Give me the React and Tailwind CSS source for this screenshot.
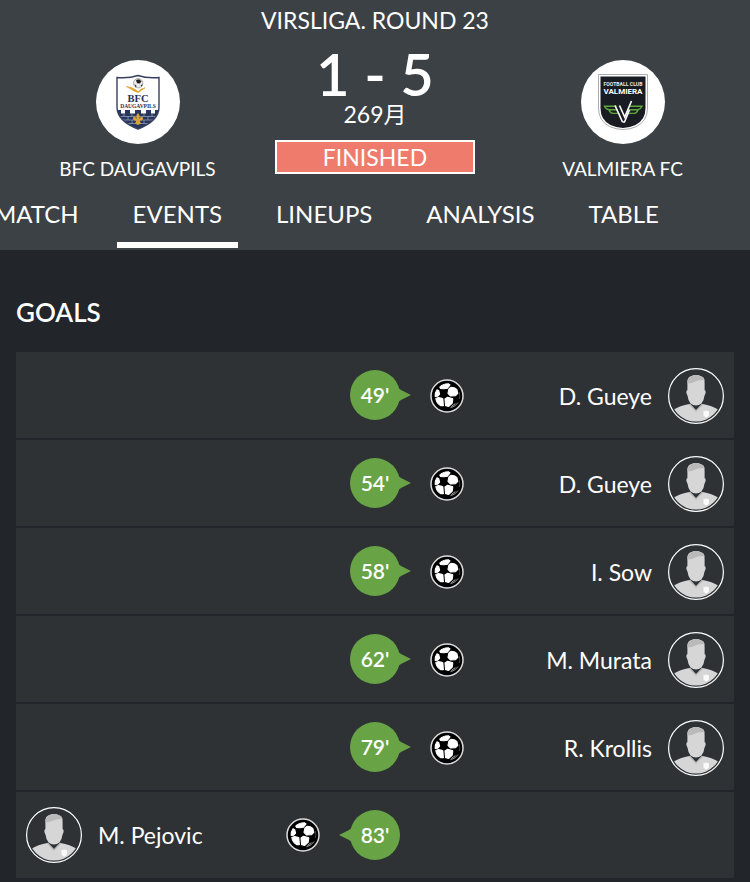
const goals = [
  { minute: "49'", player: "D. Gueye", side: "away" },
  { minute: "54'", player: "D. Gueye", side: "away" },
  { minute: "58'", player: "I. Sow", side: "away" },
  { minute: "62'", player: "M. Murata", side: "away" },
  { minute: "79'", player: "R. Krollis", side: "away" },
  { minute: "83'", player: "M. Pejovic", side: "home" },
];

const tabs = ["MATCH", "EVENTS", "LINEUPS", "ANALYSIS", "TABLE"];

function Ball() {
  return (
    <svg viewBox="0 0 34 34" className="size-[34px] shrink-0" role="img" aria-label="Goal">
      <circle cx="17" cy="17" r="16" fill="#000" stroke="#dcdcdc" strokeWidth="1.5" />
      <g fill="#fff" stroke="#fff" strokeWidth="1.1" strokeLinejoin="round">
        <path d="M9.8 8.2 Q12.6 4.9 18.6 4.8 L20 6 L17.4 9.2 L14 9.8 L10.6 9.4Z" />
        <path d="M18.9 10 L21.2 8.2 Q24.5 8.2 26.8 10.4 L27.8 14.4 L25.6 16.6 L20.4 17 L18 14.4Z" />
        <path d="M7 10.8 L8.8 11.8 L9.6 15.2 L7.8 17.2 L5.2 17.4 Q4.6 14 7 10.8Z" />
        <path d="M5.8 19.6 L8.6 18.6 L12.8 19.6 L13.4 26.6 L10.6 26.6 Q6.8 24.6 5.8 19.6Z" />
        <path d="M15 20 L17.6 18.2 L22.8 19.8 L22.2 24.2 L18.8 27.4 L15.6 26.8Z" />
      </g>
      <path d="M20.5 28.8 Q25.5 27.5 28 23.6 M21.4 27.4 L25.4 24.6" fill="none" stroke="#ccc" strokeWidth="0.8" />
      <path d="M29.4 13.2 Q30.4 17 29.2 20" fill="none" stroke="#777" strokeWidth="0.6" />
    </svg>
  );
}

function Avatar({ clip }) {
  return (
    <svg viewBox="0 0 56 56" className="size-14 shrink-0" aria-hidden="true">
      <defs>
        <clipPath id={clip}>
          <circle cx="28" cy="28" r="25.6" />
        </clipPath>
      </defs>
      <g clipPath={`url(#${clip})`} fill="#d6d6d6">
        <path d="M5 42 Q12 37.5 21.5 36 L28 43 L34.5 36 Q44 37.5 51 42 L51 56 L5 56Z" />
        <path d="M21.5 36 L28 43 L34.5 36" fill="none" stroke="#b9b9b9" strokeWidth="1.4" />
        <path d="M19.4 15 Q19 9.4 23 8.2 Q28 6 33 8.2 Q37 9.4 36.6 15 L36.6 22 Q38 22.4 37.6 25 L36.4 28 Q36 32.6 33.4 35.4 Q31 37.4 28 37.4 Q25 37.4 22.6 35.4 Q20 32.6 19.6 28 L18.4 25 Q18 22.4 19.4 22Z" />
        <path d="M19.4 15.6 Q19 9.4 23 8.2 Q28 6 33 8.2 Q36 9 36.6 12 Q31 11.8 27.4 13.4 Q23.5 15.2 19.4 15.6Z" fill="#bababa" />
        <path d="M35.4 43.2 L38.2 42.6 L41 43.2 L40.8 47.2 Q40 48.8 38.2 49.6 Q36.4 48.8 35.6 47.2Z" fill="#fafafa" />
      </g>
      <circle cx="28" cy="28" r="27.4" fill="none" stroke="#fff" strokeWidth="1.2" />
    </svg>
  );
}

function DaugavpilsCrest() {
  return (
    <svg viewBox="0 0 84 84" className="size-[84px]" role="img" aria-label="BFC Daugavpils crest">
      <defs>
        <clipPath id="daugavpils-shield">
          <path d="M21 17.5 Q33 18.5 42 15.5 Q51 18.5 63 17.5 V47 Q63 61 42 69 Q21 61 21 47Z" />
        </clipPath>
      </defs>
      <circle cx="42" cy="42" r="42" fill="#fff" />
      <g clipPath="url(#daugavpils-shield)">
        <path d="M20 50 h5 v3.5 h4 v-3.5 h5 v3.5 h5 v-3.5 h6 v3.5 h5 v-3.5 h5 v3.5 h4 v-3.5 h5 V70 H20Z" fill="#29365c" />
        <path d="M21 56.5H63 M21 60H63 M22 63.5H62 M28 53v3.5 M36 53v3.5 M48 53v3.5 M56 53v3.5 M32 56.5V60 M52 56.5V60 M36 60v3.5 M48 60v3.5" stroke="#8e9bb5" strokeWidth="0.8" />
      </g>
      <path d="M21 17.5 Q33 18.5 42 15.5 Q51 18.5 63 17.5 V47 Q63 61 42 69 Q21 61 21 47Z" fill="none" stroke="#37415f" strokeWidth="1.4" />
      <circle cx="42.2" cy="23.2" r="4.7" fill="#eee" stroke="#777" strokeWidth="0.6" />
      <path d="M40 20 l3-.7 2.5 2 -1.5 2.3 -3-.4Z M38.5 24 l2.2 2 -1 1.5Z M44.5 25 l2-.5 -.7 2.2Z" fill="#222" />
      <path d="M30.5 26.5 Q36 27 40 30 L42 31.8 L43.5 30.3 Q45 28.8 49 27.8 L45 30.5 L42.5 32.5 Q37 31 35.5 29.3Z" fill="#dfa32e" stroke="#dfa32e" strokeWidth="0.8" />
      <text x="42" y="41.8" textAnchor="middle" fontFamily="Liberation Serif, serif" fontWeight="700" fontSize="10.5" fill="#26315a">BFC</text>
      <text x="42" y="47.6" textAnchor="middle" fontFamily="Liberation Serif, serif" fontWeight="700" fontSize="5.5" fill="#26315a">DAUGAVPILS</text>
      <path d="M42 53 Q44.8 56 43 59 Q46 55 47 58 Q47 61 43.7 60.7 L45 63.5 L42 65 L39 63.5 L40.3 60.7 Q37 61 37 58 Q38 55 41 59 Q39.2 56 42 53Z" fill="#d8a33a" />
    </svg>
  );
}

function ValmieraCrest() {
  return (
    <svg viewBox="0 0 84 84" className="size-[84px]" role="img" aria-label="Valmiera FC crest">
      <circle cx="42" cy="42" r="42" fill="#fff" />
      <path d="M17.5 14.5 H66.5 V48 Q66.5 61 55.5 66.5 Q49 69.5 42 69.5 Q35 69.5 28.5 66.5 Q17.5 61 17.5 48Z" fill="#fff" stroke="#a9acb0" strokeWidth="1" />
      <path d="M19.5 16.5 H64.5 V48 Q64.5 60 54.5 65 Q48 68 42 68 Q36 68 29.5 65 Q19.5 60 19.5 48Z" fill="#191c23" />
      <text x="42" y="25.7" textAnchor="middle" fontFamily="Roboto, sans-serif" fontWeight="700" fontSize="5.1" fill="#e8e8e8">FOOTBALL CLUB</text>
      <text x="42" y="33.7" textAnchor="middle" fontFamily="Roboto, sans-serif" fontWeight="700" fontSize="8" fill="#fff">VALMIERA</text>
      <g fill="none" stroke="#5ca739" strokeWidth="1.4">
        <path d="M35.5 46.2 H23.5 Q25 49.4 28 49.8 H37 M28 49.8 Q29 53.2 32 53.4 H38.5" />
        <path d="M49 46.2 H61 Q59.5 49.4 57 49.8 H47.5 M57 49.8 Q56 53.2 53 53.4 H46" />
      </g>
      <path d="M34 45.5 L41.5 62 M38.5 45.5 L43.7 57 L50.5 41 M41.5 62 H43.5 L48.5 50" fill="none" stroke="#fff" strokeWidth="1.6" />
    </svg>
  );
}

function Minute({ value, side }) {
  return (
    <div className="relative flex size-[50px] items-center justify-center rounded-full bg-[#68a345] text-[21px] font-semibold">
      <svg
        viewBox="0 0 16 16"
        className={side === "away" ? "absolute -right-[11px] size-4" : "absolute -left-[11px] size-4 rotate-180"}
        aria-hidden="true"
      >
        <path d="M0 0 L3 0 Q4 2 6 3 L16 8 L6 13 Q4 14 3 16 L0 16Z" fill="#68a345" />
      </svg>
      <span className="relative">{value}</span>
    </div>
  );
}

function GoalRow({ goal, index }) {
  const away = goal.side === "away";
  return (
    <li className="grid h-[86px] grid-cols-[1fr_50px_1fr] items-center bg-[#2e3235] px-2.5">
      <div>
        {!away && (
          <div className="flex items-center justify-between pr-[30px]">
            <div className="flex items-center gap-4">
              <Avatar clip={`avatar-${index}`} />
              <span className="text-[23px]">{goal.player}</span>
            </div>
            <Ball />
          </div>
        )}
      </div>
      <Minute value={goal.minute} side={goal.side} />
      <div>
        {away && (
          <div className="flex items-center justify-between pt-0.5 pl-[30px]">
            <Ball />
            <div className="flex items-center gap-4">
              <span className="text-[23px]">{goal.player}</span>
              <Avatar clip={`avatar-${index}`} />
            </div>
          </div>
        )}
      </div>
    </li>
  );
}

function Team({ name, children }) {
  return (
    <div className="flex flex-col items-center gap-[11px] pt-5">
      {children}
      <span className="text-[19px] leading-7 whitespace-nowrap">{name}</span>
    </div>
  );
}

export default function App() {
  return (
    <div className="min-h-screen overflow-x-hidden bg-[#22252a] font-['Lato','Noto_Sans_CJK_JP',sans-serif] text-white">
      <header className="bg-[#3c4145]">
        <h1 className="pt-1 text-center text-[23px] leading-8">VIRSLIGA. ROUND 23</h1>
        <div className="grid grid-cols-[1fr_200px_1fr] pt-1">
          <Team name="BFC DAUGAVPILS">
            <DaugavpilsCrest />
          </Team>
          <div className="flex flex-col items-center pt-1">
            <div className="text-[58px] leading-[60px] font-semibold">1 - 5</div>
            <div className="text-[23px] leading-5">269月</div>
            <div className="mt-4 w-full border-2 border-white bg-[#ee7b6c] text-center text-[23px] leading-[30px]">
              FINISHED
            </div>
          </div>
          <div className="pl-5">
            <Team name="VALMIERA FC">
              <ValmieraCrest />
            </Team>
          </div>
        </div>
        <nav className="-ml-[22px] flex gap-[22px] pt-px pb-0.5" aria-label="Match sections">
          {tabs.map((tab) => (
            <button
              key={tab}
              type="button"
              aria-current={tab === "EVENTS" ? "page" : undefined}
              className={
                tab === "EVENTS"
                  ? "h-16 shrink-0 border-b-6 border-white px-4 pt-0.5 text-2xl"
                  : "h-16 shrink-0 border-b-6 border-transparent px-4 pt-0.5 text-2xl"
              }
            >
              {tab}
            </button>
          ))}
        </nav>
      </header>
      <main className="px-4 pt-11">
        <h2 className="text-[26px] leading-9 font-semibold">GOALS</h2>
        <ul className="mt-[22px] flex flex-col gap-0.5">
          {goals.map((goal, index) => (
            <GoalRow key={goal.minute} goal={goal} index={index} />
          ))}
        </ul>
      </main>
    </div>
  );
}
